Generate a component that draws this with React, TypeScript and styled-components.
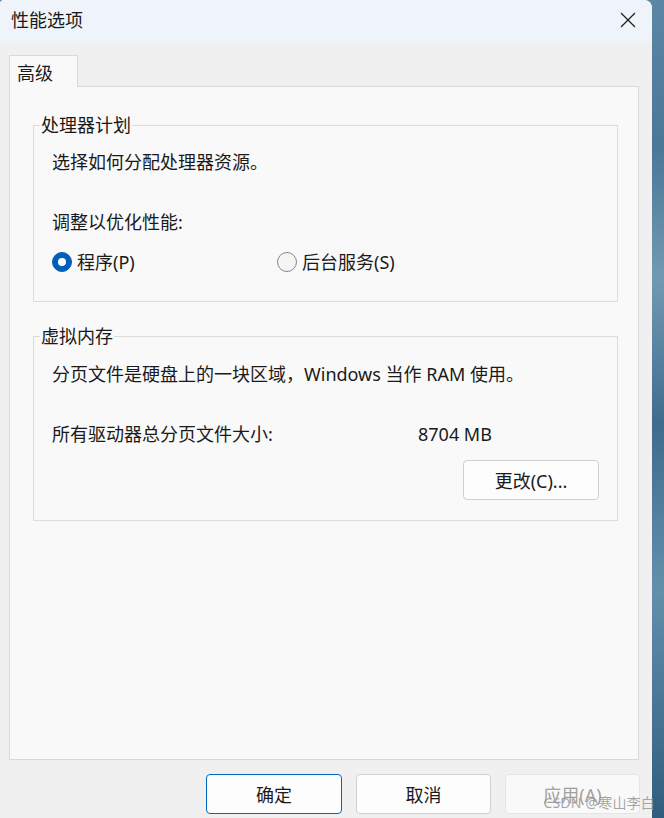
import React from 'react';
import styled, { createGlobalStyle } from 'styled-components';

const GlobalStyle = createGlobalStyle`
  html, body {
    margin: 0;
    padding: 0;
  }
  body {
    font-family: "Noto Sans", "Noto Sans CJK SC", sans-serif;
    color: #1a1a1a;
  }
`;

const Screen = styled.div`
  position: relative;
  width: 664px;
  height: 818px;
  display: flex;
  overflow: hidden;
  background: linear-gradient(
    180deg,
    #5b87a5 0%,
    #4b7896 18%,
    #7199b3 34%,
    #3f6c8c 52%,
    #6290ab 72%,
    #2f5d7d 100%
  );
`;

const Window = styled.div`
  width: 652px;
  flex: none;
  display: flex;
  flex-direction: column;
  background: #f0f0f0;
  border-radius: 4px 8px 0 0;
  overflow: hidden;
`;

const TitleBar = styled.div`
  height: 43px;
  flex: none;
  box-sizing: border-box;
  display: flex;
  align-items: center;
  justify-content: space-between;
  padding: 0 16px 3px 11px;
  background: #eef4f9;
  font-size: 18px;
  line-height: 24px;
`;

const CloseIcon = styled.svg`
  width: 16px;
  height: 16px;
  display: block;
`;

const Body = styled.div`
  flex: 1;
  display: flex;
  flex-direction: column;
  padding: 12px 13px 0 9px;
`;

const TabStrip = styled.div`
  display: flex;
`;

const Tab = styled.div`
  position: relative;
  z-index: 1;
  width: 69px;
  height: 32px;
  box-sizing: border-box;
  margin-bottom: -1px;
  padding-left: 7px;
  display: flex;
  align-items: center;
  border: 1px solid #d9d9d9;
  border-bottom: none;
  background: #f9f9f9;
  font-size: 18px;
`;

const Panel = styled.div`
  height: 674px;
  box-sizing: border-box;
  border: 1px solid #d9d9d9;
  background: #f9f9f9;
  padding: 26px 20px 0 23px;
  display: flex;
  flex-direction: column;
  gap: 22px;
`;

const GroupBox = styled.fieldset<{ $pad: string }>`
  margin: 0;
  min-width: 0;
  border: 1px solid #dcdcdc;
  padding: ${({ $pad }) => $pad};
  display: flex;
  flex-direction: column;
`;

const Legend = styled.legend`
  margin-left: -12px;
  padding: 0 1px;
  font-size: 18px;
  line-height: 24px;
`;

const Line = styled.div<{ $gap?: number }>`
  font-size: 18px;
  line-height: 24px;
  margin-top: ${({ $gap }) => $gap ?? 0}px;
`;

const RadioRow = styled.div`
  display: grid;
  grid-template-columns: 225px auto;
  margin-top: 16px;
`;

const RadioOption = styled.label`
  display: flex;
  align-items: center;
  gap: 5px;
  font-size: 18px;
  line-height: 24px;
`;

const RadioDot = styled.span<{ $checked: boolean }>`
  width: 20px;
  height: 20px;
  box-sizing: border-box;
  border-radius: 50%;
  display: flex;
  align-items: center;
  justify-content: center;
  background: ${({ $checked }) => ($checked ? '#005fb8' : '#f5f5f5')};
  border: 1px solid ${({ $checked }) => ($checked ? '#005fb8' : '#878787')};

  &::after {
    content: '';
    width: 8px;
    height: 8px;
    border-radius: 50%;
    background: #ffffff;
    display: ${({ $checked }) => ($checked ? 'block' : 'none')};
  }
`;

const SizeRow = styled.div`
  display: grid;
  grid-template-columns: 366px auto;
  margin-top: 36px;
  font-size: 18px;
  line-height: 24px;
`;

const Button = styled.button<{ $variant?: 'primary' | 'disabled'; $width?: number }>`
  width: ${({ $width }) => $width ?? 135}px;
  height: 40px;
  box-sizing: border-box;
  border-radius: 4px;
  font-family: inherit;
  font-size: 18px;
  padding: 0;
  background: ${({ $variant }) => ($variant === 'disabled' ? '#f9f9f9' : '#fdfdfd')};
  color: ${({ $variant }) => ($variant === 'disabled' ? '#a0a0a0' : '#1a1a1a')};
  border: 1px solid
    ${({ $variant }) =>
      $variant === 'primary' ? '#0067c0' : $variant === 'disabled' ? '#e6e6e6' : '#d0d0d0'};
`;

const ChangeRow = styled.div`
  display: flex;
  justify-content: flex-end;
  margin-top: 14px;
`;

const ButtonRow = styled.div`
  display: flex;
  justify-content: flex-end;
  gap: 14px;
  margin-top: 14px;
  margin-right: -1px;
`;

const Watermark = styled.div`
  position: absolute;
  right: 9px;
  bottom: 6px;
  font-size: 14px;
  line-height: 18px;
  color: rgba(150, 150, 150, 0.85);
  letter-spacing: 0.2px;
`;

export default function App() {
  return (
    <>
      <GlobalStyle />
      <Screen>
        <Window>
          <TitleBar>
            <span>性能选项</span>
            <CloseIcon viewBox="0 0 16 16">
              <path d="M1 1 L15 15 M15 1 L1 15" stroke="#1a1a1a" strokeWidth="1.2" fill="none" />
            </CloseIcon>
          </TitleBar>
          <Body>
            <TabStrip>
              <Tab>高级</Tab>
            </TabStrip>
            <Panel>
              <GroupBox $pad="13px 18px 27px">
                <Legend>处理器计划</Legend>
                <Line>选择如何分配处理器资源。</Line>
                <Line $gap={36}>调整以优化性能:</Line>
                <RadioRow>
                  <RadioOption>
                    <RadioDot $checked />
                    程序(P)
                  </RadioOption>
                  <RadioOption>
                    <RadioDot $checked={false} />
                    后台服务(S)
                  </RadioOption>
                </RadioRow>
              </GroupBox>
              <GroupBox $pad="14px 18px 20px">
                <Legend>虚拟内存</Legend>
                <Line>分页文件是硬盘上的一块区域，Windows 当作 RAM 使用。</Line>
                <SizeRow>
                  <span>所有驱动器总分页文件大小:</span>
                  <span>8704 MB</span>
                </SizeRow>
                <ChangeRow>
                  <Button $width={136}>更改(C)...</Button>
                </ChangeRow>
              </GroupBox>
            </Panel>
            <ButtonRow>
              <Button $variant="primary" $width={136}>确定</Button>
              <Button>取消</Button>
              <Button $variant="disabled">应用(A)</Button>
            </ButtonRow>
          </Body>
        </Window>
        <Watermark>CSDN @寒山李白</Watermark>
      </Screen>
    </>
  );
}
